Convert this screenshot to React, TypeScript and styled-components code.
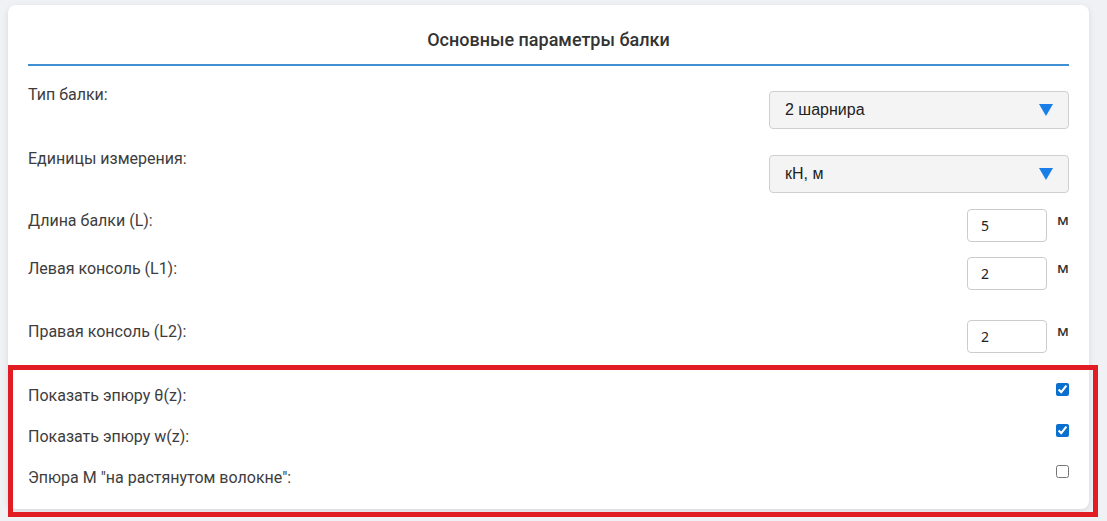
import React from "react";
import styled, { createGlobalStyle } from "styled-components";

const Global = createGlobalStyle`
  html, body { margin: 0; padding: 0; background: #f0f1f5; }
  body { font-family: Roboto, "Noto Sans", sans-serif; }
`;

const Page = styled.div`
  position: relative;
  padding: 5px 18px 12px 8px;
`;

const Card = styled.div`
  background: #fff;
  border-radius: 8px;
  box-shadow: 0 2px 6px rgba(0, 0, 0, 0.1);
  padding: 20px 20px 21px;
`;

const Header = styled.div`
  text-align: center;
  font-family: Roboto, sans-serif;
  font-weight: 500;
  font-size: 18px;
  line-height: 20px;
  color: #333;
  padding: 5px 0 14px;
  border-bottom: 2px solid #3f8fd2;
`;

const Row = styled.div<{ $mt: number }>`
  display: flex;
  justify-content: space-between;
  align-items: flex-start;
  margin-top: ${(p) => p.$mt}px;
`;

const Label = styled.div<{ $mt?: number }>`
  font-family: Roboto, sans-serif;
  font-size: 16px;
  line-height: 20px;
  color: #3d3d3d;
  margin-top: ${(p) => p.$mt ?? 0}px;
`;

const SelectBox = styled.div`
  margin-top: 6px;
  width: 300px;
  height: 38px;
  box-sizing: border-box;
  border: 1px solid #cfcfcf;
  border-radius: 4px;
  background: #f4f4f4;
  display: flex;
  align-items: center;
  justify-content: space-between;
  padding: 0 15px 0 15px;
  font-family: "Liberation Sans", Arial, sans-serif;
  font-size: 16px;
  color: #222;
`;

const Arrow = styled.svg`
  width: 14px;
  height: 12px;
  flex: none;
`;

const InputGroup = styled.div`
  display: flex;
  align-items: flex-start;
  gap: 10px;
`;

const NumInput = styled.div`
  width: 80px;
  height: 33px;
  box-sizing: border-box;
  border: 1px solid #ccc;
  border-radius: 4px;
  background: #fff;
  display: flex;
  align-items: center;
  padding-left: 13px;
  font-family: "Noto Sans", "Open Sans", sans-serif;
  font-size: 14px;
  color: #222;
`;

const Unit = styled.span`
  font-family: "Noto Sans", "Open Sans", sans-serif;
  font-size: 15px;
  font-weight: 500;
  line-height: 20px;
  color: #333;
  width: 12px;
`;

const Check = styled.input`
  margin: 0;
  width: 13px;
  height: 13px;
  accent-color: #0b6fcf;
`;

const Annotation = styled.div`
  position: absolute;
  left: 8px;
  top: 365px;
  width: 1090px;
  height: 152px;
  box-sizing: border-box;
  border: 5px solid #e21c23;
  pointer-events: none;
`;

const Select = ({ value }: { value: string }) => (
  <SelectBox>
    <span>{value}</span>
    <Arrow viewBox="0 0 14 12">
      <path d="M0 0 H14 L7 12 Z" fill="#1a7ee8" />
    </Arrow>
  </SelectBox>
);

const NumField = ({ value }: { value: string }) => (
  <InputGroup>
    <NumInput>{value}</NumInput>
    <Unit>м</Unit>
  </InputGroup>
);

export default function App() {
  return (
    <>
      <Global />
      <Page>
        <Card>
          <Header>Основные параметры балки</Header>
          <Row $mt={19}>
            <Label>Тип балки:</Label>
            <Select value="2 шарнира" />
          </Row>
          <Row $mt={20}>
            <Label>Единицы измерения:</Label>
            <Select value="кН, м" />
          </Row>
          <Row $mt={16}>
            <Label $mt={2}>Длина балки (L):</Label>
            <NumField value="5" />
          </Row>
          <Row $mt={15}>
            <Label $mt={2}>Левая консоль (L1):</Label>
            <NumField value="2" />
          </Row>
          <Row $mt={30}>
            <Label $mt={2}>Правая консоль (L2):</Label>
            <NumField value="2" />
          </Row>
          <Row $mt={30}>
            <Label $mt={3}>Показать эпюру θ(z):</Label>
            <Check type="checkbox" defaultChecked />
          </Row>
          <Row $mt={18}>
            <Label $mt={3}>Показать эпюру w(z):</Label>
            <Check type="checkbox" defaultChecked />
          </Row>
          <Row $mt={18}>
            <Label $mt={3}>Эпюра M "на растянутом волокне":</Label>
            <Check type="checkbox" />
          </Row>
        </Card>
        <Annotation />
      </Page>
    </>
  );
}
